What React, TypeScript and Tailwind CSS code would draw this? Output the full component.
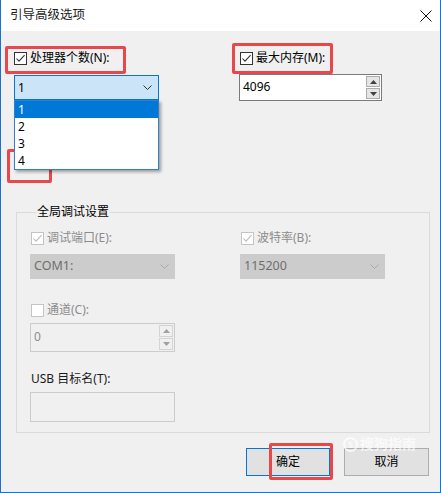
import React from 'react'

const font = "font-['Noto_Sans','Noto_Sans_CJK_SC',sans-serif]"

function Check({ checked, disabled }: { checked?: boolean; disabled?: boolean }) {
  const stroke = disabled ? '#bcbcbc' : '#333333'
  return (
    <span
      className={`w-[13px] h-[13px] border bg-white flex items-center justify-center shrink-0 ${
        disabled ? 'border-[#c4c4c4]' : 'border-[#333333]'
      }`}
    >
      {checked && (
        <svg width="11" height="11" viewBox="0 0 11 11">
          <path d="M1.5 5.5 L4 8.2 L9.6 2.2" stroke={stroke} strokeWidth="1.1" fill="none" />
        </svg>
      )}
    </span>
  )
}

function Chevron({ color }: { color: string }) {
  return (
    <svg width="9" height="5" viewBox="0 0 9 5">
      <path d="M0.5 0.5 L4.5 4.5 L8.5 0.5" stroke={color} fill="none" strokeWidth="1" />
    </svg>
  )
}

function SpinButtons({ disabled }: { disabled?: boolean }) {
  const tri = disabled ? '#a0a0a0' : '#404040'
  const box = disabled ? 'border-[#d4d4d4] bg-[#f0f0f0]' : 'border-[#acacac] bg-[#e5e5e5]'
  return (
    <div className="flex flex-col gap-[1px] py-[1px] pr-[1px]">
      <div className={`w-[14px] flex-1 border flex items-center justify-center ${box}`}>
        <svg width="7" height="4" viewBox="0 0 7 4"><path d="M0 4 L3.5 0 L7 4 Z" fill={tri} /></svg>
      </div>
      <div className={`w-[14px] flex-1 border flex items-center justify-center ${box}`}>
        <svg width="7" height="4" viewBox="0 0 7 4"><path d="M0 0 L3.5 4 L7 0 Z" fill={tri} /></svg>
      </div>
    </div>
  )
}

function RedBox({ className }: { className: string }) {
  return <div className={`absolute border-[3px] border-[#e8474c] rounded-[2px] pointer-events-none ${className}`} />
}

export default function App() {
  return (
    <div className={`relative w-[441px] h-[493px] bg-[#f0f0f0] border-x border-b border-[#1c72c9] text-[12px] text-black ${font} flex flex-col overflow-hidden`}>
      {/* Title bar */}
      <div className="h-[31px] bg-white flex items-center justify-between pl-[9px] pr-[7px] shrink-0">
        <span className="text-[12.5px] text-[#1a1a1a]">引导高级选项</span>
        <svg width="12" height="12" viewBox="0 0 12 12" className="mr-[1px]">
          <path d="M0.5 0.5 L11.5 11.5 M11.5 0.5 L0.5 11.5" stroke="#111" strokeWidth="1" />
        </svg>
      </div>

      {/* Body */}
      <div className="relative flex-1 pl-[12px] pr-[10px] pt-[19px]">
        <div className="flex">
          {/* processors */}
          <div className="w-[226px] pl-[1px] relative">
            <label className="flex items-center gap-[3px] h-[16px]">
              <Check checked />
              <span>处理器个数(N):</span>
            </label>
            <div className="mt-[9px] w-[145px] h-[25px] border border-[#0078d7] bg-[#cce4f7] flex items-center justify-between pl-[3px] pr-[6px]">
              <span>1</span>
              <Chevron color="#333" />
            </div>
            {/* open list */}
            <div className="absolute left-[1px] top-[50px] w-[145px] border border-[#2f7fd0] bg-white shadow-[2px_2px_3px_rgba(0,0,0,0.35)] z-10">
              <div className="h-[17px] bg-[#0078d7] text-white pl-[3px] leading-[17px]">1</div>
              <div className="h-[17px] pl-[3px] leading-[17px]">2</div>
              <div className="h-[17px] pl-[3px] leading-[17px]">3</div>
              <div className="h-[17px] pl-[3px] leading-[17px]">4</div>
            </div>
          </div>

          {/* memory */}
          <div>
            <label className="flex items-center gap-[3px] h-[16px] pl-[1px]">
              <Check checked />
              <span>最大内存(M):</span>
            </label>
            <div className="mt-[8px] w-[143px] h-[27px] border border-[#7a7a7a] bg-white flex items-stretch justify-between">
              <span className="pl-[3px] pt-[3px]">4096</span>
              <SpinButtons />
            </div>
          </div>
        </div>

        {/* Group box */}
        <fieldset className="mt-[103px] ml-[3px] w-[414px] border border-[#dadada] pl-[13px] pr-[10px] pb-[10px]">
          <legend className="ml-[6px] px-[1px] text-[12px] leading-[16px]">全局调试设置</legend>
          <div className="flex mt-[10px]">
            <div className="w-[210px]">
              <label className="flex items-center gap-[3px] h-[16px] pl-[1px] text-[#8c8c8c]">
                <Check checked disabled />
                <span>调试端口(E):</span>
              </label>
              <div className="mt-[8px] w-[145px] h-[25px] bg-[#cccccc] flex items-center justify-between pl-[4px] pr-[6px] text-[#6f6f6f] text-[12.5px]">
                <span>COM1:</span>
                <Chevron color="#a8a8a8" />
              </div>
            </div>
            <div>
              <label className="flex items-center gap-[3px] h-[16px] pl-[1px] text-[#8c8c8c]">
                <Check checked disabled />
                <span>波特率(B):</span>
              </label>
              <div className="mt-[8px] w-[145px] h-[25px] bg-[#cccccc] flex items-center justify-between pl-[4px] pr-[6px] text-[#6f6f6f] text-[12.5px]">
                <span>115200</span>
                <Chevron color="#a8a8a8" />
              </div>
            </div>
          </div>

          <label className="mt-[23px] flex items-center gap-[3px] h-[16px] pl-[1px] text-[#8c8c8c]">
            <Check disabled />
            <span>通道(C):</span>
          </label>
          <div className="mt-[5px] w-[145px] h-[29px] border border-[#cccccc] bg-[#f0f0f0] flex items-stretch justify-between">
            <span className="pl-[3px] pt-[4px] text-[#8c8c8c]">0</span>
            <SpinButtons disabled />
          </div>

          <div className="mt-[19px] h-[16px] leading-[16px] pl-[1px] text-[#1a1a1a]">USB 目标名(T):</div>
          <div className="mt-[5px] w-[145px] h-[30px] border border-[#cccccc] bg-[#f0f0f0]" />
        </fieldset>

        {/* Buttons */}
        <div className="flex justify-end gap-[14px] mt-[15px] mr-[1px]">
          <div className="w-[84px] h-[28px] border border-[#0078d7] bg-[#e1e1e1] flex items-center justify-center">确定</div>
          <div className="w-[85px] h-[28px] border border-[#adadad] bg-[#e1e1e1] flex items-center justify-center">取消</div>
        </div>

        {/* watermark */}
        <div className="absolute left-[342px] top-[405px] flex items-center gap-[2px] text-white/70 text-[14px] leading-[16px] font-bold pointer-events-none">
          <span className="w-[15px] h-[15px] rounded-full border-2 border-white/70 text-[9px] leading-[11px] text-center">S</span>
          <span>搜狗指南</span>
        </div>

        {/* annotation boxes */}
        <RedBox className="left-[4px] top-[15px] w-[121px] h-[28px]" />
        <RedBox className="left-[231px] top-[12px] w-[101px] h-[31px]" />
        <RedBox className="left-[6px] top-[118px] w-[45px] h-[34px]" />
        <RedBox className="left-[268px] top-[412px] w-[64px] h-[37px]" />
      </div>
    </div>
  )
}
